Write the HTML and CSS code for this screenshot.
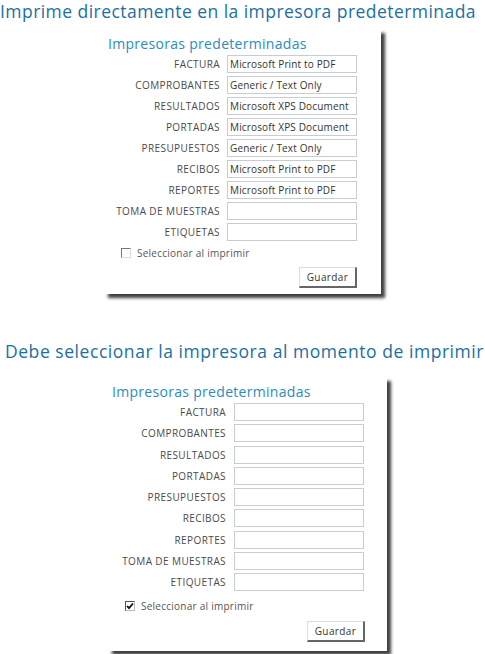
FILE: index.html
```html
<!DOCTYPE html>
<html lang="es">
<head>
<meta charset="utf-8">
<title>Impresoras predeterminadas</title>
<link rel="stylesheet" href="styles.css">
</head>
<body>
<section class="demo demo--first">
  <h1 class="demo-title">Imprime directamente en la impresora predeterminada</h1>
  <div class="panel panel--first">
    <h2 class="panel-title">Impresoras predeterminadas</h2>
    <div class="rows">
      <label class="row-label">FACTURA</label><div class="field">Microsoft Print to PDF</div>
      <label class="row-label">COMPROBANTES</label><div class="field">Generic / Text Only</div>
      <label class="row-label">RESULTADOS</label><div class="field">Microsoft XPS Document</div>
      <label class="row-label">PORTADAS</label><div class="field">Microsoft XPS Document</div>
      <label class="row-label">PRESUPUESTOS</label><div class="field">Generic / Text Only</div>
      <label class="row-label">RECIBOS</label><div class="field">Microsoft Print to PDF</div>
      <label class="row-label">REPORTES</label><div class="field">Microsoft Print to PDF</div>
      <label class="row-label">TOMA DE MUESTRAS</label><div class="field"></div>
      <label class="row-label">ETIQUETAS</label><div class="field"></div>
    </div>
    <div class="check-row">
      <span class="checkbox"></span>
      <span class="check-text">Seleccionar al imprimir</span>
    </div>
    <div class="actions"><span class="button">Guardar</span></div>
  </div>
</section>
<section class="demo demo--second">
  <h1 class="demo-title demo-title--second">Debe seleccionar la impresora al momento de imprimir</h1>
  <div class="panel panel--second">
    <h2 class="panel-title">Impresoras predeterminadas</h2>
    <div class="rows">
      <label class="row-label">FACTURA</label><div class="field"></div>
      <label class="row-label">COMPROBANTES</label><div class="field"></div>
      <label class="row-label">RESULTADOS</label><div class="field"></div>
      <label class="row-label">PORTADAS</label><div class="field"></div>
      <label class="row-label">PRESUPUESTOS</label><div class="field"></div>
      <label class="row-label">RECIBOS</label><div class="field"></div>
      <label class="row-label">REPORTES</label><div class="field"></div>
      <label class="row-label">TOMA DE MUESTRAS</label><div class="field"></div>
      <label class="row-label">ETIQUETAS</label><div class="field"></div>
    </div>
    <div class="check-row">
      <span class="checkbox checkbox--checked"><svg viewBox="0 0 8 8" width="8" height="8"><path d="M1 4 L3 6.2 L7 1.5" fill="none" stroke="#111" stroke-width="1.8"/></svg></span>
      <span class="check-text">Seleccionar al imprimir</span>
    </div>
    <div class="actions"><span class="button">Guardar</span></div>
  </div>
</section>
</body>
</html>
```
FILE: styles.css
```css
* { box-sizing: border-box; }
html, body { margin: 0; padding: 0; background: #fff; }
body {
  width: 485px;
  height: 654px;
  overflow: hidden;
  font-family: "Open Sans", "DejaVu Sans", sans-serif;
  color: #444;
}
.demo-title {
  margin: 0;
  padding-top: 2px;
  font-weight: 400;
  font-size: 17.5px;
  line-height: 19px;
  color: #1b6fa3;
  white-space: nowrap;
  letter-spacing: 0.45px;
}
.demo-title--second { padding-left: 5px; letter-spacing: 0.55px; }
.demo--second { padding-top: 46px; }

.panel {
  background: #fff;
  box-shadow: 4px 4px 3px rgba(0, 0, 0, 0.75);
  padding: 5px 0 0 4px;
}
.panel--first {
  margin: 8px 0 0 104px;
  width: 277px;
  height: 265px;
}
.panel--second {
  margin: 16px 0 0 108px;
  width: 279px;
  height: 274px;
}
.panel-title {
  margin: 0;
  font-weight: 400;
  font-size: 14px;
  line-height: 19px;
  color: #2a8dbd;
  white-space: nowrap;
  letter-spacing: 0.3px;
}
.rows {
  display: grid;
  grid-template-columns: 112px 130px;
  column-gap: 7px;
  row-gap: 3px;
  margin-top: 2px;
}
.panel--second .rows {
  grid-template-columns: 114px 130px;
  column-gap: 8px;
  row-gap: 3.25px;
}
.row-label {
  font-size: 10px;
  line-height: 18px;
  text-align: right;
  color: #4a4a4a;
  white-space: nowrap;
  letter-spacing: 0.4px;
}
.field {
  height: 18px;
  border: 1px solid #c9cdd2;
  background: #fff;
  font-size: 10px;
  line-height: 16px;
  padding-left: 2px;
  color: #333;
  white-space: nowrap;
  overflow: hidden;
  letter-spacing: 0.15px;
}
.check-row {
  display: flex;
  align-items: center;
  gap: 6px;
  margin: 5px 0 0 13px;
  height: 14px;
}
.panel--second .check-row { margin-top: 8px; }
.checkbox {
  display: inline-flex;
  align-items: center;
  justify-content: center;
  width: 10px;
  height: 10px;
  border-style: solid;
  border-width: 1px;
  border-color: #777 #ddd #ddd #777;
  background: #fff;
}
.checkbox--checked { border-color: #555 #bbb #bbb #555; }
.checkbox svg { display: block; }
.check-text {
  font-size: 10px;
  color: #555;
  white-space: nowrap;
  letter-spacing: 0.25px;
}
.actions {
  display: flex;
  justify-content: flex-end;
  width: 249px;
  margin-top: 7px;
}
.panel--second .actions { width: 253px; margin-top: 8px; }
.button {
  display: inline-block;
  width: 58px;
  height: 21px;
  border-style: solid;
  border-width: 1px 2px 2px 1px;
  border-color: #ddd #666 #666 #ddd;
  background: #fff;
  font-size: 10px;
  line-height: 18px;
  text-align: center;
  color: #333;
  letter-spacing: 0.4px;
}
```
